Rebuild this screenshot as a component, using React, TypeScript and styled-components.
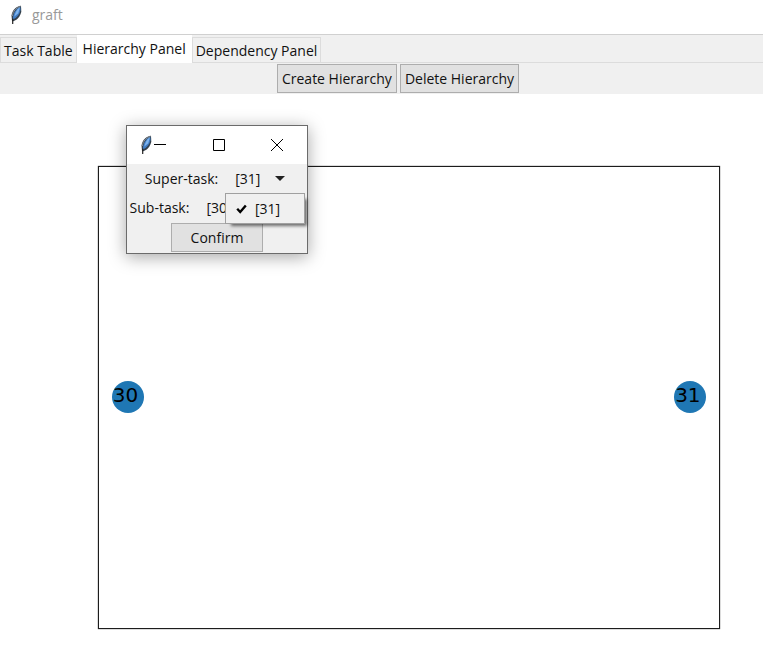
import React from "react";
import styled, { createGlobalStyle } from "styled-components";

const GlobalStyle = createGlobalStyle`
  * { box-sizing: border-box; }
  body { margin: 0; background: #fff; }
  body, button, select {
    font-family: "Open Sans", "Noto Sans", sans-serif;
    font-size: 14px;
    line-height: 20px;
    color: #111;
  }
`;

const Window = styled.div`
  display: flex;
  flex-direction: column;
  min-height: 100vh;
`;

const TitleBar = styled.header`
  display: flex;
  align-items: center;
  gap: 8px;
  height: 34px;
  padding: 0 8px 5px;
  color: #999;
`;

const Tabs = styled.div`
  display: flex;
  align-items: flex-end;
  height: 29px;
  background: #f0f0f0;
  border-top: 1px solid #d0d0d0;
  border-bottom: 1px solid #dcdcdc;
`;

const Tab = styled.button<{ $active?: boolean }>`
  height: ${(p) => (p.$active ? 28 : 25)}px;
  margin: ${(p) => (p.$active ? "0 0 -1px" : "0")};
  padding: ${(p) => (p.$active ? "0 5px 2px" : "2px 3px 0")};
  border: 1px solid ${(p) => (p.$active ? "#fff" : "#dcdcdc")};
  border-bottom: 0;
  background: ${(p) => (p.$active ? "#fff" : "#f0f0f0")};
  white-space: nowrap;
`;

const Toolbar = styled.div`
  display: flex;
  justify-content: center;
  gap: 3px;
  padding: 1px 0 1px 33px;
  background: #f0f0f0;
`;

const PushButton = styled.button<{ $wide?: boolean }>`
  height: 29px;
  padding: 0 ${(p) => (p.$wide ? 19 : 4)}px;
  border: 1px solid #adadad;
  background: #e1e1e1;
  white-space: nowrap;
`;

const Figure = styled.main`
  flex: 1;
  display: flex;
  padding: 72px 43px 36px 98px;
`;

const Axes = styled.div`
  position: relative;
  flex: 1;
  min-height: 300px;
  border: 1px solid #1c1c1c;
  box-shadow: 0 0 1px #333;
`;

const Node = styled.div<{ $x: number }>`
  position: absolute;
  left: ${(p) => p.$x}%;
  top: 49.8%;
  transform: translate(-50%, -50%);
  display: flex;
  justify-content: center;
  width: 32px;
  height: 32px;
  padding: 4px 4px 0 0;
  border-radius: 50%;
  background: #1f77b4;
  color: #000;
  font: 20px/21px "DejaVu Sans", sans-serif;
`;

const Dialog = styled.section`
  position: absolute;
  left: 126px;
  top: 125px;
  width: 182px;
  border: 1px solid #6b6b6b;
  background: #f0f0f0;
  box-shadow: 0 3px 16px rgba(0, 0, 0, 0.35);
`;

const DialogBar = styled.header`
  display: flex;
  align-items: center;
  height: 38px;
  padding-left: 11px;
  background: #fff;
`;

const Controls = styled.div`
  display: flex;
  flex: 1;
  justify-content: space-between;
  padding-right: 24px;
`;

const ControlButton = styled.button`
  display: flex;
  padding: 0;
  border: 0;
  background: none;
`;

const Field = styled.div`
  display: flex;
  align-items: center;
  justify-content: center;
  height: 29px;
  white-space: nowrap;
`;

const Picker = styled.div<{ $wide?: boolean }>`
  display: flex;
  align-items: center;
  width: ${(p) => (p.$wide ? 98 : 54)}px;
  margin-left: 17px;
  padding-right: 4px;
`;

const Select = styled.select`
  appearance: none;
  flex: 1;
  min-width: 0;
  padding: 0;
  border: 0;
  background: transparent;
`;

const DialogFooter = styled.footer`
  display: flex;
  justify-content: center;
  padding: 1px 0;
`;

const Menu = styled.div`
  position: absolute;
  left: 98px;
  top: 67px;
  width: 80px;
  height: 31px;
  padding: 5px 0 4px;
  border: 1px solid #a0a0a0;
  background: #f0f0f0;
  box-shadow: 4px 4px 3px -2px rgba(0, 0, 0, 0.55);
`;

const MenuItem = styled.button`
  display: flex;
  align-items: center;
  gap: 8px;
  width: 100%;
  padding: 0 0 0 10px;
  border: 0;
  background: none;
`;

function Feather() {
  return (
    <svg width="16" height="20" viewBox="0 0 16 20" aria-hidden="true">
      <path d="M13 .7C8.500 1 4.200 5 3.500 10.500L4 16l1.300.2c4.500-1.400 7-5.300 8-9.500z" fill="#34404c" />
      <path d="M12.300 1.700C8 3.500 5 8 4.800 14.500c4.200-1.800 6.700-5 7.700-9.500z" fill="#3f7cc4" />
      <path d="M11.800 2.300C8.300 5 7.300 8 6.300 11.500l4-3.300z" fill="#7fb4ee" />
      <path d="M12.500 1.500C8 2.500 4.800 6.500 4.300 11" fill="none" stroke="#8a8f94" strokeWidth="1" />
      <path d="M4.700 13.500v5.500" stroke="#222" strokeWidth="1.200" />
    </svg>
  );
}

const Caret = () => (
  <svg width="10" height="5" viewBox="0 0 10 5" aria-hidden="true">
    <path d="M0 0h10L5 5z" fill="#222" />
  </svg>
);

const nodes = [
  { id: 30, x: 4.6 },
  { id: 31, x: 95.3 },
];

export default function App() {
  return (
    <Window>
      <GlobalStyle />
      <TitleBar>
        <Feather />
        <span>graft</span>
      </TitleBar>
      <Tabs role="tablist">
        <Tab role="tab" aria-selected={false}>Task Table</Tab>
        <Tab role="tab" aria-selected $active>Hierarchy Panel</Tab>
        <Tab role="tab" aria-selected={false}>Dependency Panel</Tab>
      </Tabs>
      <Toolbar>
        <PushButton>Create Hierarchy</PushButton>
        <PushButton>Delete Hierarchy</PushButton>
      </Toolbar>
      <Figure>
        <Axes>
          {nodes.map((n) => (
            <Node key={n.id} $x={n.x}>{n.id}</Node>
          ))}
        </Axes>
      </Figure>
      <Dialog role="dialog" aria-label="Create hierarchy">
        <DialogBar>
          <Feather />
          <Controls>
            <ControlButton aria-label="Minimize">
              <svg width="12" height="12" viewBox="0 0 12 12"><path d="M0 5.500h12" stroke="#000" /></svg>
            </ControlButton>
            <ControlButton aria-label="Maximize">
              <svg width="12" height="12" viewBox="0 0 12 12"><path d="M.5.5h11v11H.5z" fill="none" stroke="#000" /></svg>
            </ControlButton>
            <ControlButton aria-label="Close">
              <svg width="12" height="12" viewBox="0 0 12 12"><path d="M0 0l12 12M12 0L0 12" stroke="#000" /></svg>
            </ControlButton>
          </Controls>
        </DialogBar>
        <Field>
          <label htmlFor="super">Super-task:</label>
          <Picker>
            <Select id="super" defaultValue="31"><option value="31">[31]</option></Select>
            <Caret />
          </Picker>
        </Field>
        <Field>
          <label htmlFor="sub">Sub-task:</label>
          <Picker $wide>
            <Select id="sub" defaultValue="30"><option value="30">[30]</option></Select>
          </Picker>
        </Field>
        <DialogFooter>
          <PushButton $wide>Confirm</PushButton>
        </DialogFooter>
        <Menu role="menu">
          <MenuItem role="menuitemradio" aria-checked>
            <svg width="11" height="10" viewBox="0 0 11 10" aria-hidden="true">
              <path d="M1.200 4.800l3 3.200L9.800 1.500" fill="none" stroke="#000" strokeWidth="2.400" />
            </svg>
            [31]
          </MenuItem>
        </Menu>
      </Dialog>
    </Window>
  );
}
